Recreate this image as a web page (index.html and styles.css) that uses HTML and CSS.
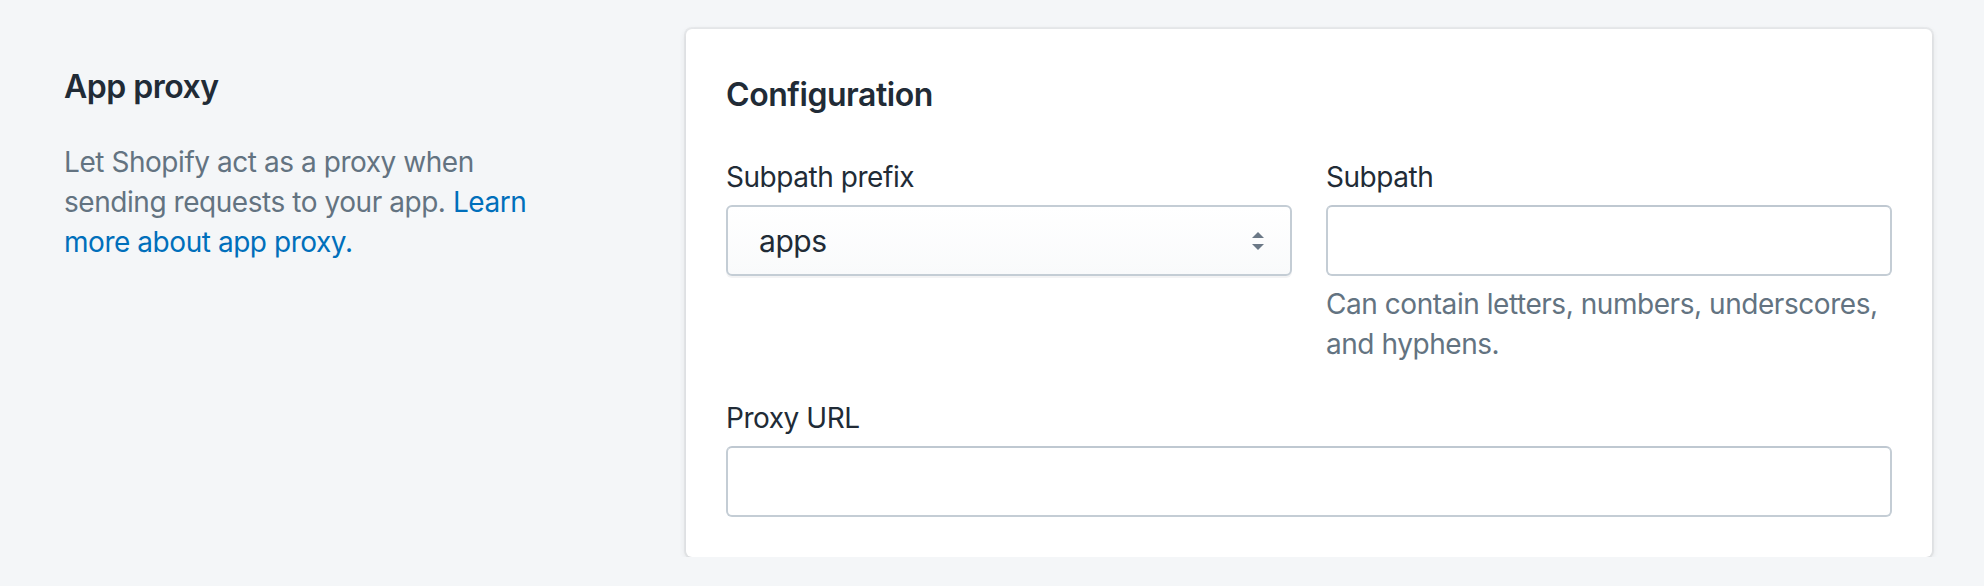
FILE: index.html
```html
<!DOCTYPE html>
<html lang="en">
<head>
<meta charset="utf-8">
<title>App proxy</title>
<link rel="stylesheet" href="styles.css">
</head>
<body>
<div class="page">
  <section class="annotation">
    <h2 class="annotation-title">App proxy</h2>
    <p class="annotation-desc">Let Shopify act as a proxy when sending requests to your app. <a class="link" href="#">Learn more about app proxy.</a></p>
  </section>
  <section class="card">
    <h2 class="card-title">Configuration</h2>
    <div class="form">
      <div class="form-row">
        <div class="field">
          <label class="label">Subpath prefix</label>
          <div class="select">
            <span class="select-value">apps</span>
            <svg class="select-arrows" width="12" height="18" viewBox="0 0 12 18" aria-hidden="true">
              <path d="M0 6 L6 0 L12 6 Z" fill="#6b7886"/>
              <path d="M0 12 L12 12 L6 18 Z" fill="#6b7886"/>
            </svg>
          </div>
        </div>
        <div class="field">
          <label class="label">Subpath</label>
          <input class="text-input" type="text">
          <p class="help">Can contain letters, numbers, underscores, and hyphens.</p>
        </div>
      </div>
      <div class="field">
        <label class="label">Proxy URL</label>
        <input class="text-input" type="text">
      </div>
    </div>
  </section>
</div>
</body>
</html>
```

FILE: styles.css
```css
* { box-sizing: border-box; }
html, body {
  margin: 0;
  padding: 0;
  background: #f4f6f8;
  font-family: Inter, "Noto Sans", "Liberation Sans", sans-serif;
  letter-spacing: -0.45px;
  color: #212b36;
}
.page {
  display: grid;
  grid-template-columns: 582px 1246px;
  column-gap: 40px;
  padding: 29px 52px 0 64px;
  align-items: start;
}
.annotation {
  padding-top: 34px;
}
.annotation-title {
  margin: 0;
  font-size: 32px;
  line-height: 48px;
  font-weight: 600;
  letter-spacing: -0.5px;
  color: #212b36;
}
.annotation-desc {
  margin: 31px 0 0;
  max-width: 480px;
  font-size: 28px;
  line-height: 40px;
  color: #637381;
}
.link {
  color: #006fbb;
  text-decoration: none;
}
.card {
  background: #fff;
  border-radius: 6px;
  box-shadow: 0 0 0 2px rgba(63, 63, 68, 0.05), 0 2px 6px 0 rgba(63, 63, 68, 0.15);
  padding: 40px;
}
.card-title {
  margin: 2px 0 0;
  font-size: 32px;
  line-height: 48px;
  font-weight: 600;
  letter-spacing: -0.45px;
  color: #212b36;
}
.form {
  margin-top: 38px;
  display: flex;
  flex-direction: column;
  gap: 34px;
}
.form-row {
  display: grid;
  grid-template-columns: 1fr 1fr;
  column-gap: 34px;
}
.field {
  display: flex;
  flex-direction: column;
}
.label {
  font-size: 28px;
  line-height: 40px;
  color: #212b36;
  margin-bottom: 8px;
}
.select {
  height: 71px;
  display: flex;
  align-items: center;
  justify-content: space-between;
  padding: 0 26px 0 31px;
  border: 2px solid #c4cdd5;
  border-radius: 6px;
  background: linear-gradient(180deg, #ffffff, #f9fafb);
  box-shadow: 0 2px 0 0 rgba(22, 29, 37, 0.05);
}
.select-value {
  font-size: 30px;
  color: #212b36;
}
.select-arrows {
  display: block;
}
.text-input {
  display: block;
  width: 100%;
  height: 71px;
  margin: 0;
  padding: 0 24px;
  border: 2px solid #c4cdd5;
  border-top-color: #bfc8d1;
  border-radius: 6px;
  background: #fff;
  font: inherit;
  font-size: 30px;
  outline: none;
}
.help {
  margin: 8px 0 0;
  font-size: 28px;
  line-height: 40px;
  color: #637381;
}
```
